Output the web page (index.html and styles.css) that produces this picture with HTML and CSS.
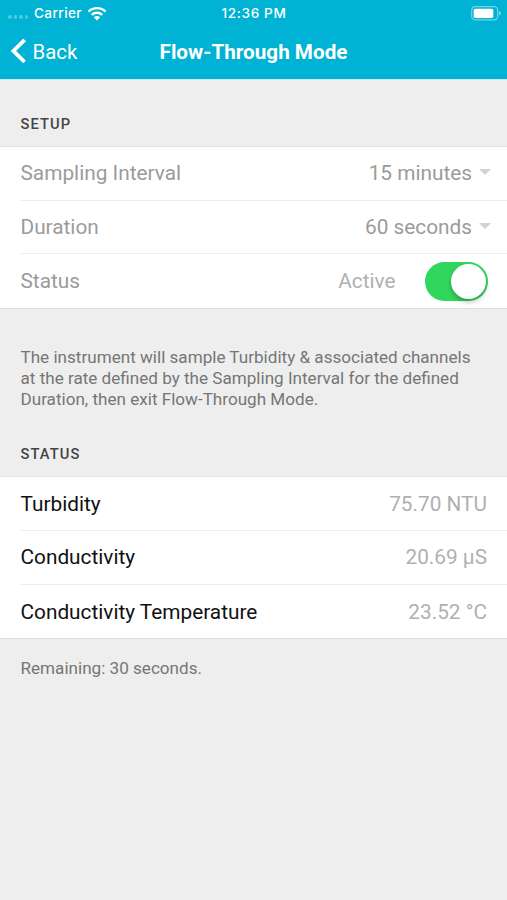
FILE: index.html
```html
<!DOCTYPE html>
<html lang="en">
<head>
    <meta charset="UTF-8">
    <meta name="viewport" content="width=device-width, initial-scale=1.0">
    <title>Flow-Through Mode</title>
    <link rel="stylesheet" href="styles.css">
</head>
<body>
    <header>
        <div class="status-bar">
            <div class="carrier">
                <span class="signal"><i></i><i></i><i></i><i></i></span>
                <span>Carrier</span>
                <svg class="wifi" width="20" height="15" viewBox="0 0 20 15">
                    <g fill="none" stroke="#fff" stroke-width="2.3">
                        <path d="M1.5 5.6A12.2 12.2 0 0 1 18.5 5.6"/>
                        <path d="M4.7 8.9A7.6 7.6 0 0 1 15.3 8.9"/>
                    </g>
                    <path fill="#fff" d="M10 14.5L6.9 11.3A4.4 4.4 0 0 1 13.1 11.3Z"/>
                </svg>
            </div>
            <span class="clock">12:36 PM</span>
            <svg class="battery" width="31" height="15" viewBox="0 0 31 15">
                <rect x="0.7" y="0.7" width="26" height="13.2" rx="3.6" fill="none" stroke="#fff" stroke-opacity="0.45" stroke-width="1.2"/>
                <rect x="2.7" y="2.7" width="19.6" height="9.2" rx="1.6" fill="#fff"/>
                <path d="M28.2 5v4.6q1.8-.8 1.8-2.3t-1.8-2.3z" fill="#fff" fill-opacity="0.5"/>
            </svg>
        </div>
        <nav>
            <a class="back">
                <svg width="16" height="26" viewBox="0 0 16 26">
                    <path d="M14.6 1.8L3.4 12.9L14.6 24" fill="none" stroke="#fff" stroke-width="3.8"/>
                </svg>
                <span>Back</span>
            </a>
            <h1>Flow-Through Mode</h1>
        </nav>
    </header>
    <main>
        <h2>SETUP</h2>
        <ul class="list setup">
            <li>
                <span>Sampling Interval</span>
                <span class="select">15 minutes</span>
            </li>
            <li>
                <span>Duration</span>
                <span class="select">60 seconds</span>
            </li>
            <li>
                <span>Status</span>
                <span class="value">Active<span class="toggle"></span></span>
            </li>
        </ul>
        <p class="note">The instrument will sample Turbidity &amp; associated channels<br>at the rate defined by the Sampling Interval for the defined<br>Duration, then exit Flow-Through Mode.</p>
        <h2>STATUS</h2>
        <ul class="list">
            <li>
                <span>Turbidity</span>
                <span class="value">75.70 NTU</span>
            </li>
            <li>
                <span>Conductivity</span>
                <span class="value">20.69 µS</span>
            </li>
            <li>
                <span>Conductivity Temperature</span>
                <span class="value">23.52 °C</span>
            </li>
        </ul>
        <p class="remaining">Remaining: 30 seconds.</p>
    </main>
</body>
</html>
```
FILE: styles.css
```css
* {
    box-sizing: border-box;
}

body {
    font-family: Roboto, sans-serif;
    margin: 0;
    min-height: 900px;
    background-color: #eeeeee;
}

header {
    height: 79px;
    background-color: #00b2d3;
    color: white;
    box-shadow: 0 1px 0 #cdeaf0;
}

.status-bar {
    display: grid;
    grid-template-columns: 1fr auto 1fr;
    align-items: center;
    height: 26px;
    padding: 0 7px 0 8px;
    font-family: Inter, sans-serif;
    font-size: 13.6px;
    font-weight: 500;
    letter-spacing: 0.4px;
}

.clock {
    letter-spacing: 0.6px;
}

.carrier {
    display: flex;
    align-items: center;
}

.signal {
    display: flex;
    gap: 2px;
    margin: 8px 6px 0 0;
}

.signal i {
    width: 3.5px;
    height: 3.5px;
    border-radius: 50%;
    background-color: rgba(255, 255, 255, 0.3);
}

.wifi {
    margin-left: 5px;
}

.battery {
    justify-self: end;
    margin-right: -2px;
}

nav {
    display: grid;
    grid-template-columns: 1fr auto 1fr;
    align-items: center;
    height: 50px;
    padding: 0 10px;
}

.back {
    display: flex;
    align-items: center;
    gap: 7px;
    font-size: 20.4px;
}

.back span {
    padding-top: 1px;
}

.back svg {
    margin-right: -0.5px;
}

h1 {
    margin: 0;
    padding-top: 1px;
    font-size: 20.7px;
    font-weight: 700;
}

h2 {
    margin: 0;
    padding: 36px 20.5px 0;
    height: 67px;
    font-size: 14.7px;
    line-height: 18px;
    font-weight: 500;
    letter-spacing: 1.1px;
    color: #444;
}

.list {
    list-style: none;
    margin: 0;
    padding: 0 0 0 20.5px;
    background-color: white;
    border-top: 1px solid #e2e2e2;
    border-bottom: 1px solid #e0e0e0;
    font-size: 20.8px;
    color: #111;
}

.list li {
    display: flex;
    justify-content: space-between;
    align-items: center;
    height: 53.7px;
    padding-right: 20px;
    border-bottom: 1px solid #ececec;
}

.list li:last-child {
    height: 53.4px;
    border-bottom: 0;
}

.setup li {
    color: #9b9b9b;
}

.list .value {
    display: flex;
    align-items: center;
    color: #b0b0b2;
}

.select {
    display: flex;
    align-items: center;
    margin-right: -4px;
}

.select::after {
    content: "";
    margin: -3px 0 0 7px;
    border: 6px solid transparent;
    border-top-color: #d2d2d2;
    border-bottom: 0;
}

.toggle {
    width: 63px;
    height: 39px;
    margin: 0 -0.5px 0 29px;
    padding: 2px;
    border-radius: 20px;
    background-color: #31d75d;
}

.toggle::after {
    content: "";
    display: block;
    width: 35px;
    height: 35px;
    margin-left: auto;
    border-radius: 50%;
    background-color: white;
    box-shadow: 0 3px 5px rgba(0, 0, 0, 0.25);
}

.note, .remaining {
    margin: 0;
    padding: 0 20.5px;
    font-size: 17.1px;
    line-height: 20.8px;
    color: #767676;
}

.note {
    padding-top: 38.3px;
}

.remaining {
    padding-top: 19px;
}
```
